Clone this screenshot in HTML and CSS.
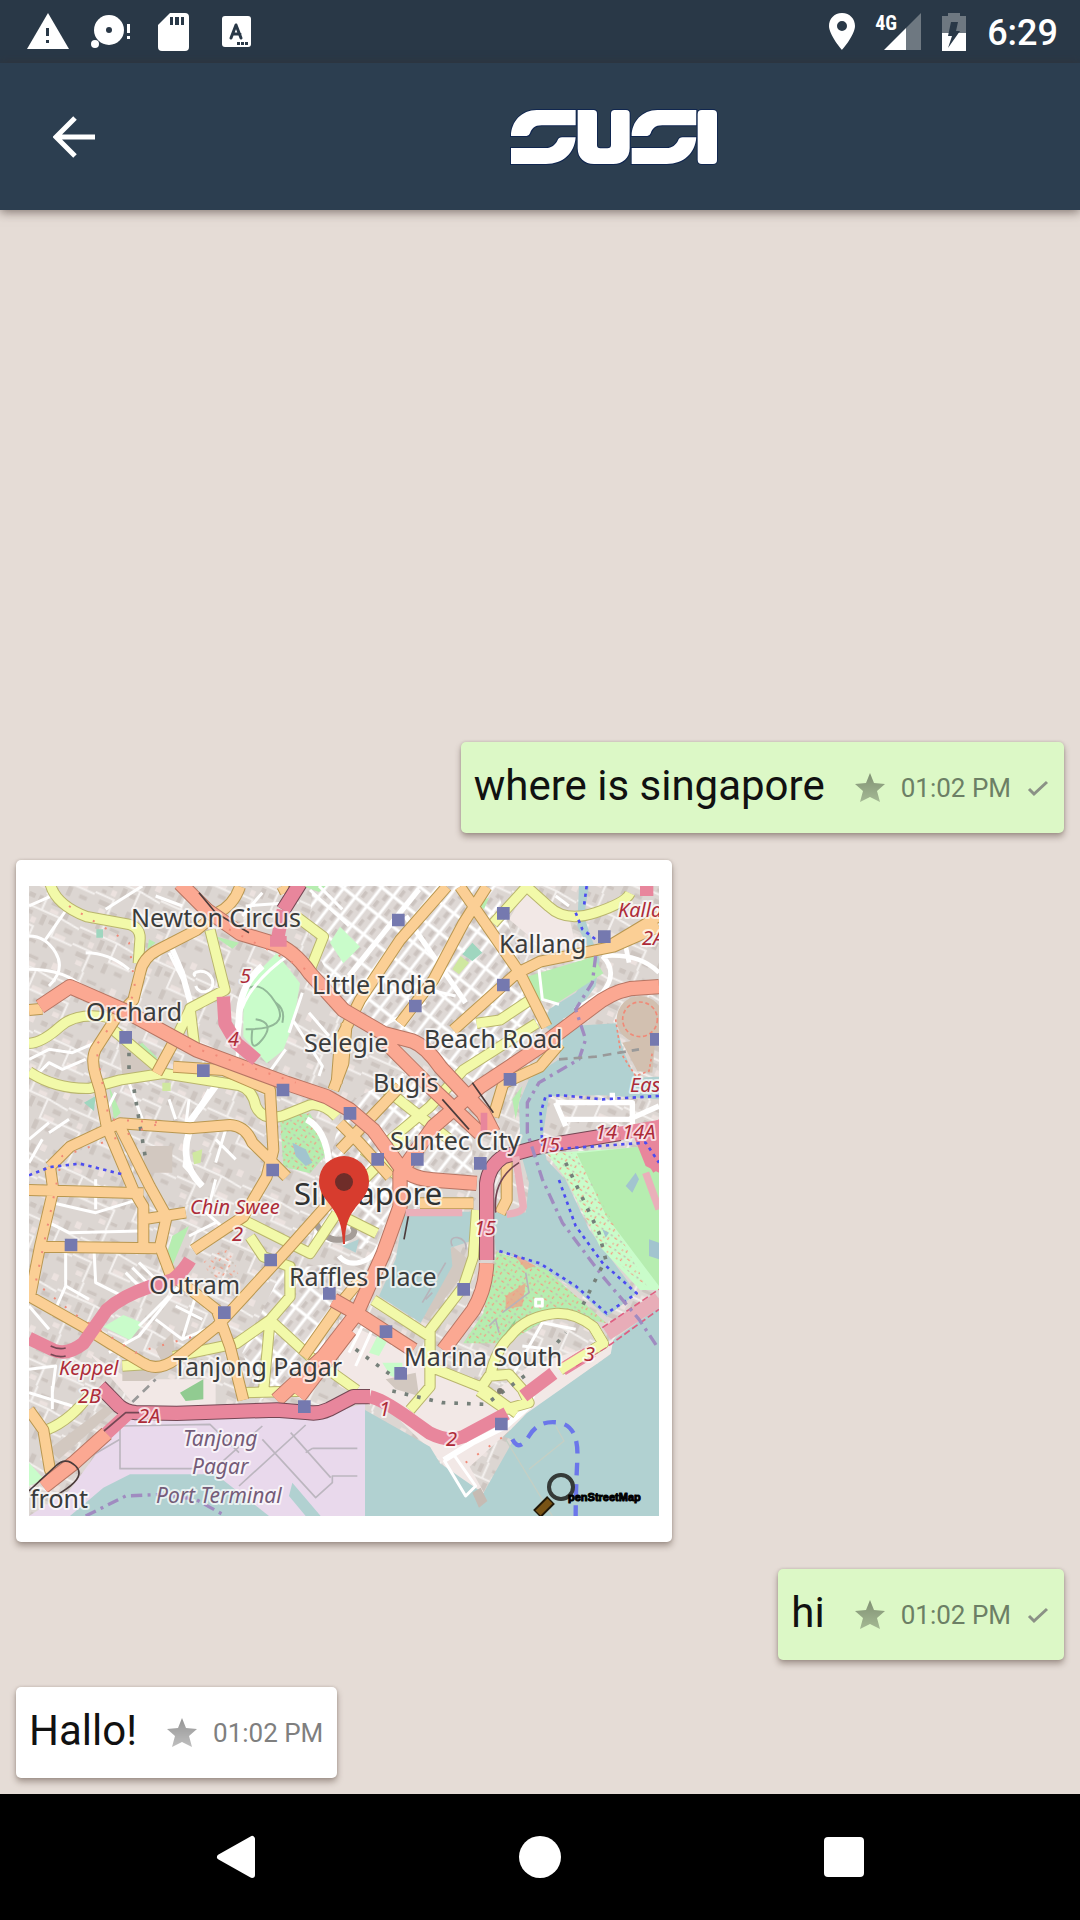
FILE: index.html
```html
<!DOCTYPE html>
<html lang="en">
<head>
<meta charset="utf-8">
<meta name="viewport" content="width=device-width, initial-scale=1">
<title>SUSI chat</title>
<link rel="stylesheet" href="styles.css">
</head>
<body>
<svg class="defs" aria-hidden="true">
  <defs>
    <linearGradient id="star-fill" x1="0" y1="0" x2="0" y2="1"><stop offset="0" stop-color="#000" stop-opacity=".42"/><stop offset="1" stop-color="#000" stop-opacity=".25"/></linearGradient>
    <symbol id="star" viewBox="0 0 30 30"><path fill="url(#star-fill)" d="M15 0 19 10 30 11 22 18 25 29 15 24 5 29 8 18 0 11 11 10Z"/></symbol>
    <symbol id="check" viewBox="0 0 22 18"><path d="M2 10 7 15 20 3" fill="none" stroke="#8b9186" stroke-width="3"/></symbol>
  </defs>
</svg>

<div class="status">
  <div class="status-left">
    <svg width="42" height="37" viewBox="0 0 42 37"><path fill="#fff" d="M21 0 42 36H0Z"/><path fill="#293847" d="M19 15h3v8h-3zM19 27h3v3h-3z"/></svg>
    <svg width="40" height="37" viewBox="0 0 40 37"><circle cx="18" cy="17" r="15" fill="#fff"/><circle cx="18" cy="17" r="3" fill="#293847"/><circle cx="4" cy="31" r="4" fill="#fff"/><path fill="#fff" d="M36 11h3v9h-3zM36 23h3v3h-3z"/></svg>
    <svg width="31" height="38" viewBox="0 0 31 38"><path fill="#fff" d="M12 0H27Q31 0 31 4V34Q31 38 27 38H4Q0 38 0 34V12Z"/><path fill="#293847" d="M12 4h3v8h-3zM17 4h4v8h-4zM23 4h3v8h-3z"/></svg>
    <svg width="29" height="31" viewBox="0 0 29 31"><rect width="29" height="31" rx="3" fill="#fff"/><path d="M9 22 14 9 19 22M11 18h7" fill="none" stroke="#293847" stroke-width="3" stroke-linecap="round" stroke-linejoin="round"/><path d="M15 26h3v3h-3zM19 26h3v3h-3zM23 26h3v3h-3z" fill="#293847"/></svg>
  </div>
  <div class="status-right">
    <svg width="26" height="37" viewBox="0 0 26 37"><path fill="#fff" fill-rule="evenodd" d="M13 0C5 0 0 6 0 13 0 22 13 37 13 37S26 22 26 13C26 6 21 0 13 0ZM13 8a5 5 0 1 1 0 10 5 5 0 0 1 0-10Z"/></svg>
    <div class="signal"><span>4G</span><svg width="37" height="37" viewBox="0 0 37 37"><path fill="#6e7881" d="M37 0V37H22V15Z"/><path fill="#fff" d="M22 15V37H0Z"/></svg></div>
    <svg width="24" height="38" viewBox="0 0 24 38"><path fill="#6e7881" d="M0 3H6V0H18V3H24V20H0Z"/><path fill="#fff" d="M0 20H24V38H0Z"/><path fill="#293847" d="M9 9H16L14 18H18L6 35 10 23H6Z"/></svg>
    <time>6:29</time>
  </div>
</div>

<header class="toolbar">
  <button class="back" aria-label="Back"><svg width="42" height="42" viewBox="0 0 42 42"><path d="M42 21H4M22 2 3 21 22 40" fill="none" stroke="#fff" stroke-width="5"/></svg></button>
  <svg class="logo" role="img" aria-label="SUSI" width="210" height="58" viewBox="90 84 630 174">
    <g fill="#fff" stroke="#10264f" stroke-width="6" paint-order="stroke">
      <path id="logo-s" d="M93 168C93 125 125 90 170 90H287V136H185C163 136 155 146 150 160Q147 168 140 168ZM93 204H198C214 204 226 194 232 182Q236 172 246 172H287C283 220 250 252 198 252H93Z"/>
      <path d="M293 90H340Q351 90 351 101V196Q351 205 361 205H382Q393 205 393 195V101Q393 90 404 90H438Q449 90 449 101V205C449 235 428 252 400 252H342C314 252 293 235 293 205Z"/>
      <use href="#logo-s" x="362"/>
      <rect x="653" y="90" width="58" height="162" rx="12"/>
    </g>
  </svg>
</header>

<main class="chat">
  <article class="bubble sent"><p>where is singapore</p><svg class="star"><use href="#star"/></svg><time>01:02 PM</time><svg class="check"><use href="#check"/></svg></article>

  <article class="bubble card">
    <svg class="map" role="img" aria-label="Map of Singapore" viewBox="0 0 630 630">
      <defs>
        <pattern id="blocks" width="190" height="170" patternUnits="userSpaceOnUse" patternTransform="rotate(24)">
          <rect width="190" height="170" fill="#dcd6d2"/>
          <path fill="#cdc5c0" d="M10 12h20v14H10zM42 10h12v26H42zM84 14h30v10H84zM14 62h28v12H14zM72 60h14v32H72zM98 66h18v14H98zM16 88h14v10H16zM130 20h16v30h-16zM150 70h26v14h-26zM20 120h34v14H20zM110 120h14v30h-14zM150 130h24v12h-24zM66 140h20v10H66z"/>
          <path fill="#ece2df" d="M88 34h26v12H88zM44 78h16v18H44zM130 96h34v16h-34zM160 10h18v20h-18zM30 144h20v14H30z"/>
          <path fill="none" stroke="#f4f1ef" stroke-width="6" d="M0 50H122V112H190M64 0V50M0 105H60V170M122 50 190 58"/>
        </pattern>
        <pattern id="grid" width="72" height="44" patternUnits="userSpaceOnUse" patternTransform="rotate(-52)">
          <rect width="72" height="44" fill="#ded8d5"/>
          <path fill="#cbc3bf" d="M12 12h22v10H12zM44 22h20v12H44z"/>
          <path fill="none" stroke="#fff" stroke-width="9" d="M0 0H72M0 0V44M0 44H72M72 0V44"/>
        </pattern>
        <pattern id="specks" width="34" height="30" patternUnits="userSpaceOnUse" patternTransform="rotate(35)">
          <path fill="#f59a83" d="M4 5h9v4H4zM22 16h4v8h-4zM9 22h4v4H9z"/><path fill="#c8bcb0" d="M24 3h6v5h-6z"/>
        </pattern>
      </defs>
      <g transform="scale(.33333333)" fill="none" stroke-linejoin="round">
        <rect width="1890" height="1890" fill="url(#blocks)"/>
        <path fill="url(#grid)" d="M850 0H1400L1540 420 1350 600 1160 470 940 350 840 150ZM940 660 1120 560 1330 740 1330 860 1200 860 1000 1090 850 1060ZM760 1150 940 1130 880 1400 700 1540 640 1400Z"/>
        <path fill="#f2e8e6" d="M180 1400 300 1480H560V1560H320ZM930 1300 1180 1420 1380 1530 1500 1440 1755 1360 1748 1402 1500 1580 1322 1742 1373 1835 1330 1860 1233 1722 1100 1590 930 1500ZM1500 0 1620 90 1640 180 1560 200 1440 100Z"/>
        <path fill="#d2c8c0" d="M280 1450H410L360 1485H280ZM60 1690 230 1560 260 1570 90 1720ZM270 470 380 560 280 570ZM1070 1480 1160 1460 1170 1530 1100 1510ZM1270 1080 1330 1130 1200 1300 1170 1270ZM350 780H430V860H340ZM380 1390 430 1340 440 1410 400 1430Z"/>

        <path fill="#b1d1d1" d="M1650 0H1680L1665 90 1685 150 1712 220 1700 300 1650 370 1600 400 1630 420 1760 412 1785 500 1820 575 1890 572V640L1720 628 1560 630 1540 760 1553 822 1610 882 1680 1030 1823 1222 1733 1292 1640 1210 1533 1142 1400 1092 1390 980 1490 980 1500 890 1475 800 1470 650 1500 580 1590 520 1600 460 1545 420 1560 370 1640 320 1690 260 1690 210 1645 120ZM1125 977H1335V1062L1265 1085 1270 1140 1175 1310 1050 1230 1100 1120ZM940 1080 990 1060 980 1100ZM1890 1262 1753 1362 1745 1405 1493 1582 1425 1652 1453 1662 1363 1822 1233 1732 1203 1682 1008 1572V1890H1890Z"/>
        <path fill="#c6bbb3" d="M1330 1820 1350 1865 1375 1845 1355 1805Z"/>
        <path fill="#e9d9ec" d="M1008 1552 863 1592H283L123 1812 0 1890H1008Z"/>
        <path fill="#b1d1d1" d="M123 1890 223 1805 303 1765H560L720 1890ZM780 1830 790 1790 875 1890H830Z"/>
        <path stroke="#bcb6bf" stroke-width="5" d="M273 1610V1748H500M273 1660 170 1720M273 1620 543 1615 630 1700M543 1760 700 1620M700 1660 860 1835 910 1790V1770H985M785 1640 905 1775M630 1800 830 1617M850 1687H985M850 1687 830 1700"/>

        <path fill="#c9fcca" d="M743 202 813 292 793 412 763 492 713 532 643 452V302ZM903 170 933 122 993 182 943 232ZM223 1322 283 1287 343 1312 303 1362ZM1553 802 1890 780V1212H1833L1713 1082 1613 882ZM0 1730 45 1780 0 1800ZM1050 1340 1080 1355 1050 1410 1020 1400ZM1060 1430H1120V1480L1085 1470Z"/>
        <path fill="#b6edb0" d="M753 692 843 682 903 792 843 862 763 842ZM1493 272 1693 212 1723 262 1583 352 1523 342ZM1643 802 1833 782 1890 860V1200L1733 992ZM1403 1097 1553 1152 1733 1312 1583 1282 1433 1372H1303L1363 1282ZM430 1050 480 1020 430 1140 410 1120ZM240 600 275 680 255 700ZM340 470 385 515 370 530 325 480ZM820 0H890L870 18ZM360 160 380 170 355 190ZM555 150 630 170 610 188ZM1340 50 1380 35 1365 70ZM1450 640 1480 600 1460 700Z"/>
        <path fill="#91cb91" d="M453 1520 523 1480V1540L470 1545ZM1400 1380 1460 1300 1450 1360Z"/>
        <path fill="#9fd6bf" d="M165 650 200 630 195 675ZM1300 205 1330 170 1360 200 1330 225ZM202 130H222V155H202Z"/>
        <path fill="#cfe8a0" d="M1270 250 1295 210 1320 230 1290 265ZM400 590H425V615H400ZM490 800 520 790 515 830 495 835Z"/>
        <path fill="url(#specks)" d="M1403 1097 1553 1152 1733 1312 1583 1282 1433 1372H1303L1363 1282ZM753 692 843 682 903 792 843 862 763 842ZM1553 802 1640 802 1860 1212 1713 1082 1613 882ZM520 1130 600 1080 630 1170 560 1190Z"/>
        <path fill="#f59a83" fill-opacity=".7" d="M1450 1100 1520 1140 1490 1150ZM1430 1230 1490 1190 1480 1260 1430 1270Z"/>
        <circle cx="1833" cy="400" r="70" fill="#d2c0b0"/><circle cx="1833" cy="400" r="52" stroke="#f08a78" stroke-width="5" stroke-dasharray="12 8"/>
        <path fill="#d2c0b0" d="M1780 470 1880 450 1870 560 1825 555Z"/><path stroke="#f08a78" stroke-width="5" stroke-dasharray="8 8" d="M1760 400 1775 500 1820 570 1860 555 1870 500"/>
        <path stroke="#92b898" stroke-width="6" d="M640 320Q690 270 740 350T650 430M680 400Q740 410 700 460T670 430M740 350Q770 370 760 410"/>
        <path fill="#a2c4cf" d="M790 770 830 790 850 830 830 840 800 810ZM1790 900 1820 860 1830 880 1810 920ZM1860 1060 1890 1070V1120L1860 1110ZM1720 1030 1740 1040 1730 1055Z"/>

        <g stroke="#fff" stroke-width="9">
          <path d="M0 60 90 20M0 150Q50 150 80 200T60 300M50 160 120 60M0 250Q110 250 170 310M230 70 340 0M170 200Q240 200 300 250M420 200 460 280 485 370M500 270C480 260 530 240 550 280 560 320 510 330 500 300M380 30 460 60M700 20 640 90M650 60 780 50M843 12 960 120M870 0 940 70M790 200Q640 300 625 420V520M820 320 780 440M840 380 900 450M720 560 770 490M790 400 880 540 870 570"/>
          <path d="M0 520 60 490 130 500 200 470M30 560 60 530 100 550 170 520M260 620 230 680M300 590 340 700M420 640 440 700M480 640 470 720M540 610 480 720M480 740 465 840 520 900M560 880 540 960M60 740 120 700M0 760 60 710M0 830 40 760M560 760 620 820M590 730 560 830"/>
          <path stroke-width="20" d="M560 600 480 710M480 740Q450 830 520 900M833 700Q890 730 900 830M700 240Q630 300 630 400L622 470"/>
          <path stroke-width="16" d="M1170 10 1040 170 960 270M1130 90 1310 350M430 190 460 260 485 350M930 1110C960 1150 1030 1130 1050 1080"/>
          <path d="M70 950 200 980 330 940M60 1010 120 1040 330 1035M200 880V970M110 1060V1200L70 1290M195 1090 200 1190 300 1240M110 1200 180 1240M330 1130 380 1180 230 1290M290 1160 340 1210M310 1145 360 1195M0 1260 60 1330M240 1400 330 1350 450 1200M380 1300 460 1360 530 1330M440 1260 520 1300M500 1230 460 1360M420 1230 330 1320"/>
          <path d="M0 1450 80 1440 70 1520M0 1520 130 1560M70 1500V1570M480 1050 560 1010M520 970 600 1040M1150 300 1280 330M1060 420 1190 350M1530 250 1540 340 1590 355M1580 30 1620 60"/>
          <path stroke-width="14" d="M1640 370 1720 320Q1770 260 1720 210M1720 210Q1830 200 1890 260M1790 180 1800 230"/>
          <path stroke-width="16" d="M1580 650H1810V720M1580 650 1610 720M1600 700H1800L1890 660M1750 620V650"/>
          <path stroke-width="18" d="M1430 1592 1508 1532 1500 1560 1430 1620 1330 1670 1245 1722"/>
          <path d="M1245 1722 1310 1830 1340 1800 1270 1700M1450 1470 1540 1310 1640 1330M1480 1380 1560 1390M1520 1240h20v20h-20zM1090 1380 1100 1350M960 1400 1000 1320 1030 1330 980 1440"/>
          <path stroke="#b7b3ba" stroke-width="5" d="M1270 1080C1250 1040 1320 1050 1310 1090M1190 1240 1210 1220M1380 1320 1400 1300 1410 1340M1490 1160 1500 1220 1420 1280M1180 1250 1250 1130"/>
        </g>
        <path stroke="#a59d98" stroke-width="18" d="M860 1010Q890 1070 940 1060T970 1020"/>

        <g stroke-width="34" stroke="#b9b56d">
          <path id="yellow" d="M63-8Q80 57 173 92L300 115Q335 125 333 160L328 232M543 132 588 312 483 367 493 452 498 492M483 370 443 452M0 472Q40 470 93 422T253 397M253 432 383 542M0 557Q80 610 183 607L273 582 403 562 630 598Q670 610 680 660 700 705 760 690L843 657Q883 650 923 692M803 92 883 152 843 252M1393 112 1493 2 1560 62Q1610 110 1700 80T1803 22M1503 342 1413 402 1343 412M1523 412 1303 552 1203 662 1083 762M1073 612 1263 762M1133 752 973 912M1003 792 1123 882M663 1052 703 1112 783 1142V1232L723 1302 623 1372 433 1412M723 1302 843 1412 983 1512M723 1302 703 1522M643 1002 843 1102 923 982M923 982 1043 1042M1343 972 1333 1112 1303 1202 1203 1332V1502L1143 1572M1033 1242 1203 1352M1203 1442 1353 1502 1463 1582M1383 1472Q1400 1390 1443 1352 1490 1290 1583 1282 1640 1280 1693 1322L1723 1372 1593 1452M1350 1515 1380 1470 1440 1465 1480 1510 1500 1550 1430 1570 1350 1515M53 1632Q130 1600 183 1522M280 1440 360 1435M640 1520 830 1515"/>
        </g>
        <g stroke="#f2f9a9" stroke-width="28"><use href="#yellow"/></g>

        <g stroke-width="36" stroke="#b99750">
          <path id="orange" d="M633 2Q613 60 563 82L503 132 390 190Q340 215 333 262L313 342 263 392 200 490Q185 520 200 570L213 612 233 722 313 912 343 962V1082M273 722 363 902 413 992 393 1082 423 1162 563 1272 603 1382 643 1542M63 842 123 782 273 712 483 727 603 717Q650 720 670 770L713 812 773 872M63 842 73 912 33 1082 3 1232 163 1322 243 1372 340 1430Q383 1460 440 1420L563 1322 783 1082 943 902M0 912 343 922M33 1082 383 1087M343 1000 470 980M493 1092 643 992 713 872 733 792 723 612 583 552 433 542M383 562 443 452M1253 2 1113 162 993 342 933 462 923 592M1293 2 1473 262 1553 422M1373 2 1303 112 1213 282 1113 412M1273 432 1463 262 1533 227 1753 182 1890 122M1740 180 1890 90M1393 692 1423 592 1533 542 1593 472M0 1572 43 1632 63 1752 83 1772M823 1412 943 1242 993 1182M1173 952H1333M1413 982 1433 942V812M953 412 943 532 913 612M933 712 993 772 1083 872M1113 602 933 792M760 0 770 20M0 372 40 368"/>
        </g>
        <g stroke="#fbcf95" stroke-width="30"><use href="#orange"/></g>

        <g stroke-width="46" stroke="#b77563">
          <path id="salmon" d="M453-8 533 72 633 142 733 172Q793 190 843 262L943 372 1063 442 1150 465Q1190 480 1233 542L1363 682 1393 740M33 362 123 302 283 372 503 492 773 592 893 632 963 672 1033 732 1113 842Q1150 880 1213 882L1343 892M1073 472 1193 592 1353 742M1890 302 1803 308Q1743 320 1693 362L1533 482 1353 602 1213 722 1113 862V962L1063 1102 983 1282 883 1412 743 1542M913 1242 983 1282 1153 1392M1373 1132Q1370 1210 1333 1272L1243 1392M43 1802 133 1732 233 1642M963 1332 810 1532"/>
        </g>
        <g stroke="#fba892" stroke-width="40"><use href="#salmon"/></g>
        <g stroke="#4c3c3c" stroke-width="5"><path d="M510 20 560 80 660 140M1140 980 1125 1060M0 1815 80 1740Q110 1710 140 1740T110 1810L80 1830M1330 590 1393 680M1240 640 1320 730"/></g>

        <g stroke="#744754" stroke-width="46">
          <path id="pink" d="M813-8 763 72M213 1502 270 1560Q290 1577 320 1580L443 1582 743 1572 840 1580Q870 1584 900 1570L973 1532H1023M1373 1122V892Q1380 840 1423 812L1533 782 1773 742"/>
        </g>
        <g stroke="#e8869c" stroke-width="40"><path d="M763 72 743 172M583 332 588 412 623 472 683 522M0 1357 73 1392Q113 1410 163 1372L233 1272Q280 1230 363 1202L430 1182Q460 1160 483 1122M1023 1532Q1060 1540 1133 1592L1200 1640Q1260 1670 1303 1652L1433 1582M1483 1530 1573 1462M1690 1395 1600 1450M1773 742 1890 722M1853 0V30M1850 780 1890 850M233 1642 300 1580"/><use href="#pink"/></g>
        <path fill="#e8869c" d="M723 150h50v32h-50zM1810 740 1890 700V860L1850 840ZM1355 680h20v60h-20z"/>
        <path stroke="#eab0ba" stroke-width="22" d="M1460 812 1483 962Q1480 980 1433 985M1130 980H1300M1850 860 1890 970"/>
        <path stroke="#e8adb8" stroke-width="44" d="M1733 1342 1890 1240"/>
        <path stroke="#df5f82" stroke-width="5" stroke-dasharray="20 9" d="M1640 1440 1745 1375 1890 1270M1720 1325 1890 1210"/>
        <path stroke="#f2f9a9" stroke-width="28" d="M1693 1322 1723 1372 1593 1452"/>
        <path stroke="#744754" stroke-width="5" d="M65 1380Q90 1392 110 1386M65 1405Q90 1416 110 1410M225 1635 290 1580H330M1400 980Q1390 880 1470 830"/>

        <path stroke="#4c4cf0" stroke-width="8" stroke-dasharray="10 13" d="M0 868 63 843 153 833 280 865M1673 0 1665 60M1640 80 1660 130 1700 160M1540 780 1535 680 1550 630 1600 628 1720 640 1890 630M1570 790 1850 770 1890 830M1590 882 1640 1020 1720 1130 1823 1222 1733 1282 1640 1200 1533 1132 1400 1092"/>
        <path stroke="#6b76ea" stroke-width="13" stroke-dasharray="38 26" d="M1450 1660Q1470 1700 1500 1650T1590 1610 1645 1720 1640 1890"/>
        <path stroke="#a08bc0" stroke-width="10" stroke-dasharray="34 16 9 16" d="M1700 210 1690 290 1640 370 1670 460 1650 520 1530 590 1495 650V740L1540 880 1600 1010 1720 1170 1830 1300 1890 1390M170 1890 290 1830 400 1825 500 1840 590 1890"/>
        <path stroke="#999" stroke-width="8" stroke-dasharray="26 18" d="M1590 520 1700 512 1830 490M310 1548 380 1480"/>
        <path stroke="#c5cfc4" stroke-width="4" d="M1430 1660 1570 1890M1500 1750 1605 1665 1580 1620"/>
        <path stroke="#76807a" stroke-width="11" stroke-dasharray="11 27" d="M1610 830 1710 1040 1730 1120 1650 1280M980 1390 1090 1470M1090 1515 1240 1550 1370 1555 1500 1460M1585 1370 1610 1340M300 500V570M315 610 350 820"/>
        <circle cx="1413" cy="1515" r="9" fill="#77756f"/>
        <path stroke="#f08a78" stroke-width="6" stroke-dasharray="6 36" d="M120 60 300 170 320 320 200 480 240 700 400 710 100 810 60 1000 20 1190 130 1280 320 1400 500 1350M600 130 830 250 900 340M480 480 800 590M1310 1730 1440 1640"/>

        <path fill="#7579af" d="M271 435h38v38h-38zM504 535h38v38h-38zM743 593h38v38h-38zM712 833h38v38h-38zM944 663h38v38h-38zM1089 83h38v38h-38zM1404 63h38v38h-38zM1707 133h38v38h-38zM1404 278h38v38h-38zM1140 341h38v38h-38zM1424 561h38v38h-38zM1863 441h38v38h-38zM1027 801h38v38h-38zM1146 801h38v38h-38zM1335 813h38v38h-38zM107 1058h38v38h-38zM706 1103h38v38h-38zM567 1261h38v38h-38zM882 1203h38v38h-38zM807 1543h38v38h-38zM1285 1191h38v38h-38zM1052 1318h38v38h-38zM1096 1443h38v38h-38zM1398 1595h38v38h-38z"/>
      </g>

      <g class="place">
        <text x="102" y="41">Newton Circus</text><text x="57" y="135">Orchard</text><text x="283" y="108">Little India</text><text x="275" y="166">Selegie</text><text x="470" y="67">Kallang</text><text x="395" y="162">Beach Road</text><text x="344" y="206">Bugis</text><text x="361" y="264">Suntec City</text><text x="120" y="408">Outram</text><text x="260" y="400">Raffles Place</text><text x="144" y="490">Tanjong Pagar</text><text x="375" y="480">Marina South</text><text x="1" y="622">front</text>
        <text class="city" x="265" y="319">Singapore</text>
      </g>
      <g class="exit">
        <text x="161" y="328">Chin Swee</text><text x="203" y="355">2</text><text x="30" y="489">Keppel</text><text x="49" y="517">2B</text><text x="109" y="537">2A</text><text x="445" y="349">15</text><text x="555" y="475">3</text><text x="350" y="530">1</text><text x="417" y="560">2</text><text x="509" y="266">15</text><text x="566" y="253">14 14A</text><text x="589" y="31">Kalla</text><text x="613" y="59">2A</text><text x="601" y="206">Eas</text><text x="211" y="97">5</text><text x="199" y="160">4</text>
      </g>
      <g class="port">
        <text x="154" y="560">Tanjong</text><text x="163" y="588">Pagar</text><text x="127" y="617">Port Terminal</text>
      </g>
      <path d="M522 614 508 628" stroke="#201808" stroke-width="11"/><path d="M521 615 509 627" stroke="#785315" stroke-width="7"/>
      <circle cx="532" cy="601" r="12" fill="none" stroke="#353a38" stroke-width="4"/>
      <text class="credit" x="539" y="615">penStreetMap</text>
      <path fill="#d73c2e" d="M314 358C313 334 307 327 298 315 292 307 290 302 290 295A25 25 0 0 1 340 295C340 302 338 307 332 315 322 327 316 334 316 358Z"/><circle cx="315" cy="296" r="9" fill="#6f2d29"/>
    </svg>
  </article>

  <article class="bubble sent"><p>hi</p><svg class="star"><use href="#star"/></svg><time>01:02 PM</time><svg class="check"><use href="#check"/></svg></article>
  <article class="bubble"><p>Hallo!</p><svg class="star"><use href="#star"/></svg><time>01:02 PM</time></article>
</main>

<nav class="navbar">
  <button aria-label="Back"><svg width="40" height="44" viewBox="0 0 40 44"><path d="M36 4V40L4 22Z" fill="#fff" stroke="#fff" stroke-width="6" stroke-linejoin="round"/></svg></button>
  <button aria-label="Home"><svg width="42" height="42" viewBox="0 0 42 42"><circle cx="21" cy="21" r="21" fill="#fff"/></svg></button>
  <button aria-label="Recent apps"><svg width="40" height="40" viewBox="0 0 40 40"><rect width="40" height="40" rx="4" fill="#fff"/></svg></button>
</nav>
</body>
</html>
```
FILE: styles.css
```css
* { box-sizing: border-box; }
body { margin: 0; min-height: 100vh; display: flex; flex-direction: column; background: #e5dcd6; font-family: Roboto, "Liberation Sans", sans-serif; }
p { margin: 0; }
svg { display: block; flex: none; }
button { border: 0; padding: 0; background: none; cursor: pointer; }
.defs { position: absolute; width: 0; height: 0; }

.status { height: 63px; padding: 0 22px 0 16px; display: flex; align-items: center; justify-content: space-between; background: #293847; color: #fff; }
.status-left { display: grid; grid-template-columns: repeat(4, 63px); place-items: center; }
.status-right { display: flex; align-items: center; gap: 21px; }
.status-right time { padding-top: 3px; font-size: 36px; line-height: 40px; font-weight: 500; }
.signal { position: relative; padding-left: 8px; }
.signal span { position: absolute; left: -1px; top: 0; font: 700 20px/20px "Roboto Condensed", Roboto, sans-serif; }

.toolbar { height: 147px; padding: 0 53px; display: grid; grid-template-columns: 42px 1fr; align-items: center; background: #2c3e50; box-shadow: 0 2px 10px rgba(60, 45, 40, .6); position: relative; }
.logo { justify-self: center; margin-left: 108px; }

.chat { flex: 1; padding: 16px; display: flex; flex-direction: column; justify-content: flex-end; align-items: flex-start; gap: 27px; }
.bubble { min-height: 91px; max-width: 100%; padding: 0 14px 0 13px; display: flex; align-items: center; border-radius: 5px; background: #fff; color: #111; box-shadow: 0 4px 6px rgba(70, 50, 40, .4), 0 0 3px rgba(70, 50, 40, .2); }
.bubble p { padding-bottom: 4px; font-size: 42px; line-height: 50px; }
.bubble time { font-size: 26px; line-height: 32px; color: #7f7f7f; }
.bubble.sent { align-self: flex-end; padding-right: 15px; background: #dcf8c6; }
.sent time { color: #6c7f65; }
.star { width: 30px; height: 30px; margin: 0 16px 0 30px; }
.check { width: 22px; height: 18px; margin-left: 16px; }

.bubble.card { width: 656px; padding: 26px 13px; }
.map { width: 100%; height: auto; overflow: hidden; }
.map text { font-family: "Noto Sans", sans-serif; paint-order: stroke; stroke: rgba(255, 255, 255, .7); stroke-width: 4px; stroke-linejoin: round; }
.place { font-size: 25px; fill: #3a3c3c; }
.map .city { font-size: 31px; fill: #303232; }
.exit { font-size: 20px; font-style: italic; fill: #ad2b38; }
.port { font-size: 21px; font-style: italic; fill: #745c78; }
.map .credit { font: 700 11px "Liberation Sans", sans-serif; fill: #000; stroke: #000; stroke-width: 1px; }

.navbar { height: 126px; display: grid; grid-template-columns: repeat(3, 304px); justify-content: center; background: #000; }
.navbar button { display: grid; place-items: center; }
```
